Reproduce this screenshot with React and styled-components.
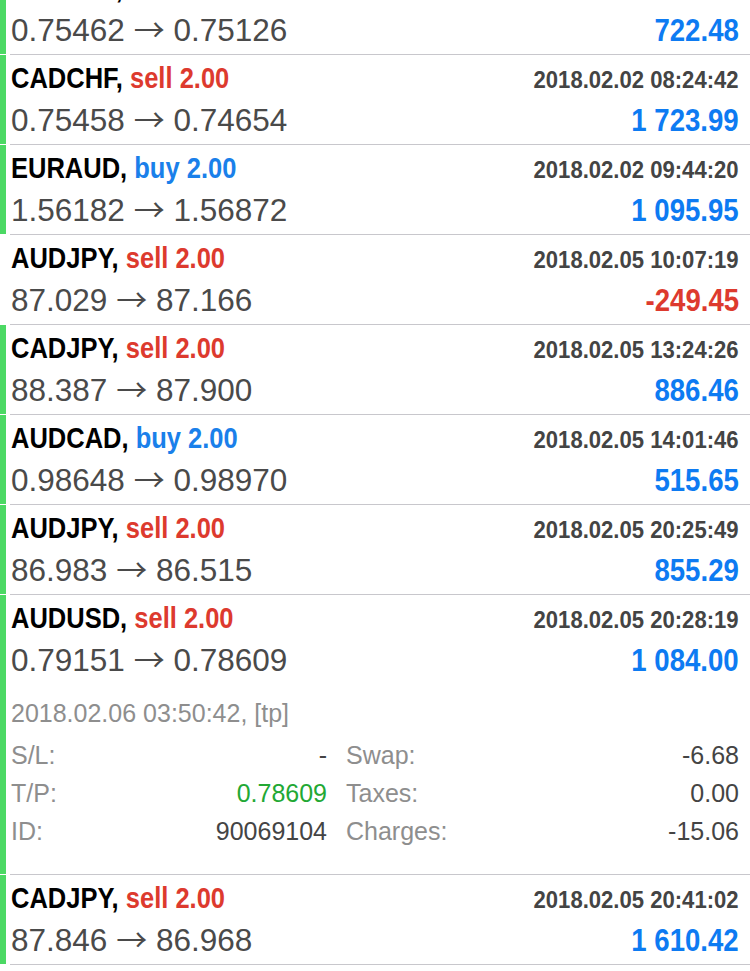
import styled, { createGlobalStyle } from 'styled-components';

const GlobalStyle = createGlobalStyle`
  html, body {
    margin: 0;
    padding: 0;
    background: #ffffff;
    overflow: hidden;
  }
  body {
    font-family: "Liberation Sans", Arial, sans-serif;
    -webkit-font-smoothing: antialiased;
  }
`;

const List = styled.div`
  margin-top: -35px;
  background: #ffffff;
`;

const Row = styled.div`
  display: flex;
  align-items: stretch;
`;

const Bar = styled.div`
  flex: 0 0 6px;
  margin-right: 4px;
  margin-bottom: 1px;
  background: ${props => (props.$visible ? '#4cd964' : 'transparent')};
`;

const Body = styled.div`
  flex: 1;
  padding: 2px 11px 3px 1px;
  border-bottom: 1px solid #c8c7cc;
`;

const Line = styled.div`
  display: flex;
  justify-content: space-between;
  align-items: baseline;
  height: 42px;
  line-height: 42px;
  white-space: nowrap;
`;

/* the app uses a condensed bold face; squeeze the bold sans to its width */
const Condensed = styled.span`
  display: inline-block;
  font-family: "Liberation Sans", Arial, sans-serif;
  font-weight: 700;
  transform: scaleX(${props => props.$squeeze || 0.85});
  transform-origin: ${props => (props.$right ? 'right' : 'left')} center;
`;

const Symbol = styled(Condensed)`
  font-size: 30px;
  color: #000000;
`;

const Side = styled.span`
  color: ${props => (props.$type === 'buy' ? '#1a80ea' : '#dd3a2e')};
`;

const OpenTime = styled(Condensed)`
  font-size: 23px;
  color: #444444;
`;

const Prices = styled.span`
  font-size: 31.5px;
  color: #4a4a4a;
`;

const Arrow = styled.span`
  font-family: "Noto Sans CJK JP", sans-serif;
  font-size: 31px;
  line-height: 1;
  color: #4a4a4a;
`;

const Profit = styled(Condensed)`
  font-size: 31px;
  color: ${props => (props.$loss ? '#dd3a2e' : '#0d7bf2')};
`;

const Details = styled.div`
  padding: 13px 0 21px;
  font-size: 25px;
  line-height: 38px;
  white-space: nowrap;
`;

const CloseTime = styled.div`
  color: #8e8e8e;
  margin-bottom: 4px;
`;

const Grid = styled.div`
  display: grid;
  grid-template-columns: 316px 1fr;
  column-gap: 19px;
`;

const Cell = styled.div`
  display: flex;
  justify-content: space-between;
`;

const Label = styled.span`
  color: #8e8e8e;
`;

const Value = styled.span`
  color: ${props => (props.$green ? '#22a834' : '#444444')};
`;

const trades = [
  { symbol: 'CADCHF', type: 'sell', volume: '2.00', time: '2018.02.01 22:18:05', open: '0.75462', close: '0.75126', profit: '722.48' },
  { symbol: 'CADCHF', type: 'sell', volume: '2.00', time: '2018.02.02 08:24:42', open: '0.75458', close: '0.74654', profit: '1 723.99' },
  { symbol: 'EURAUD', type: 'buy', volume: '2.00', time: '2018.02.02 09:44:20', open: '1.56182', close: '1.56872', profit: '1 095.95' },
  { symbol: 'AUDJPY', type: 'sell', volume: '2.00', time: '2018.02.05 10:07:19', open: '87.029', close: '87.166', profit: '-249.45', loss: true },
  { symbol: 'CADJPY', type: 'sell', volume: '2.00', time: '2018.02.05 13:24:26', open: '88.387', close: '87.900', profit: '886.46' },
  { symbol: 'AUDCAD', type: 'buy', volume: '2.00', time: '2018.02.05 14:01:46', open: '0.98648', close: '0.98970', profit: '515.65' },
  { symbol: 'AUDJPY', type: 'sell', volume: '2.00', time: '2018.02.05 20:25:49', open: '86.983', close: '86.515', profit: '855.29' },
  {
    symbol: 'AUDUSD', type: 'sell', volume: '2.00', time: '2018.02.05 20:28:19', open: '0.79151', close: '0.78609', profit: '1 084.00',
    details: {
      closed: '2018.02.06 03:50:42, [tp]',
      rows: [
        [{ label: 'S/L:', value: '-' }, { label: 'Swap:', value: '-6.68' }],
        [{ label: 'T/P:', value: '0.78609', green: true }, { label: 'Taxes:', value: '0.00' }],
        [{ label: 'ID:', value: '90069104' }, { label: 'Charges:', value: '-15.06' }],
      ],
    },
  },
  { symbol: 'CADJPY', type: 'sell', volume: '2.00', time: '2018.02.05 20:41:02', open: '87.846', close: '86.968', profit: '1 610.42' },
];

const TradeRow = ({ trade }) => (
  <Row>
    <Bar $visible={!trade.loss} />
    <Body>
      <Line>
        <Symbol $squeeze={0.85}>
          {trade.symbol}, <Side $type={trade.type}>{trade.type} {trade.volume}</Side>
        </Symbol>
        <OpenTime $right $squeeze={0.96}>{trade.time}</OpenTime>
      </Line>
      <Line>
        <Prices>
          {trade.open} <Arrow>→</Arrow> {trade.close}
        </Prices>
        <Profit $right $squeeze={0.89} $loss={trade.loss}>{trade.profit}</Profit>
      </Line>
      {trade.details && (
        <Details>
          <CloseTime>{trade.details.closed}</CloseTime>
          <Grid>
            {trade.details.rows.flat().map((item, i) => (
              <Cell key={i}>
                <Label>{item.label}</Label>
                <Value $green={item.green}>{item.value}</Value>
              </Cell>
            ))}
          </Grid>
        </Details>
      )}
    </Body>
  </Row>
);

export default function App() {
  return (
    <>
      <GlobalStyle />
      <List>
        {trades.map((t, i) => (
          <TradeRow key={i} trade={t} />
        ))}
      </List>
    </>
  );
}
